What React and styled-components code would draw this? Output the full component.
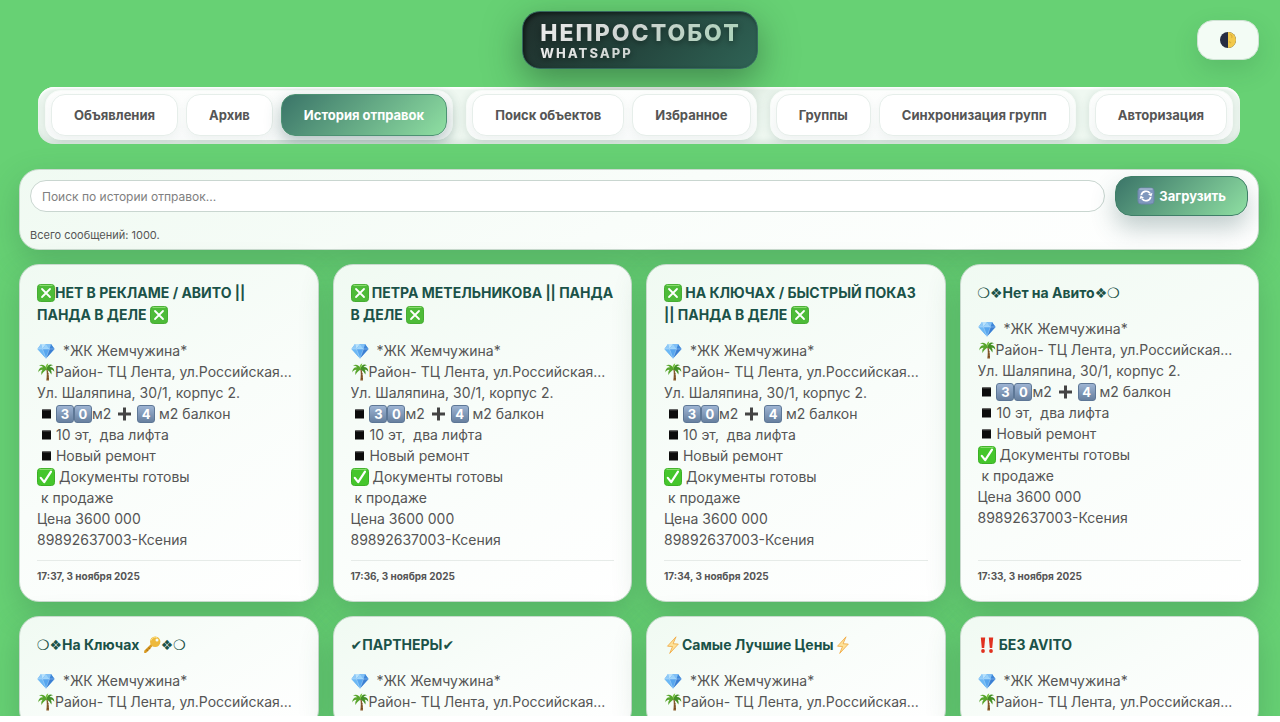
import React, { useState } from 'react'
import styled, { createGlobalStyle, css, ThemeProvider } from 'styled-components'

const theme = {
    page: '#67d174',
    text: '#555555',
    title: '#1b5248',
    dark: '#3a7468',
    light: '#8fdfa2',
    panel: 'linear-gradient(150deg, #f0faf2 0%, #f9fdfa 50%, #ffffff 100%)',
}

const GlobalStyle = createGlobalStyle`
    * {
        box-sizing: border-box;
    }

    body {
        margin: 0;
        background: #ffffff;
        color: ${({theme})=>theme.text};
        font-family: Inter, "Noto Sans", "DejaVu Sans", sans-serif;
    }

    button,
    input {
        font-family: inherit;
    }
`

const Page = styled.div`
    height: calc(100vh - 6px);
    overflow: hidden;
    background: ${({theme})=>theme.page};
`

const Header = styled.header`
    display: grid;
    grid-template-columns: 1fr auto 1fr;
    align-items: center;
    padding: 11px 21px 0;
`

const Logo = styled.div`
    grid-column: 2;
    padding: 8px 16px 7px 17px;
    border: 1px solid #35695f;
    border-radius: 18px;
    background: linear-gradient(135deg, #1f2e2b 0%, #24453d 50%, #2f6355 100%);
    box-shadow: 0 12px 36px rgba(30, 70, 40, 0.5), inset 2px 2px 4px rgba(0, 0, 0, 0.5);
`

const LogoText = styled.span`
    display: block;
    color: transparent;
    background: linear-gradient(135deg, #ececec 0%, #cdd3d0 45%, #a9d3b8 100%);
    background-clip: text;
    filter: drop-shadow(0 2px 3px rgba(0, 0, 0, 0.4));
`

const LogoTitle = styled(LogoText)`
    font-size: 23px;
    line-height: 26px;
    font-weight: 800;
    letter-spacing: 2px;
`

const LogoSub = styled(LogoText)`
    font-size: 13px;
    line-height: 15px;
    font-weight: 800;
    letter-spacing: 2px;
`

const ThemeButton = styled.button`
    grid-column: 3;
    justify-self: end;
    display: flex;
    align-items: center;
    justify-content: center;
    width: 62px;
    height: 40px;
    border: 1px solid #cfe3d4;
    border-radius: 16px;
    background: #f3fcf5;
    box-shadow: 0 10px 24px rgba(40, 100, 60, 0.18);
    cursor: pointer;
`

const Nav = styled.nav`
    display: flex;
    justify-content: space-between;
    margin: 18px 40px 0 38px;
    padding: 3px 7px 4px;
    overflow: hidden;
    border-radius: 16px;
    background: #eff8f1;
    box-shadow: inset 0 2px 2px #ffffff, inset 0 -4px 4px rgba(60, 110, 90, 0.1);
`

const NavGroup = styled.div`
    display: flex;
    gap: 8px;
    padding: 3px 5px;
    border: 1px solid #f7fbf8;
    border-radius: 16px;
    background: linear-gradient(180deg, #fdfefd, #f8fafa);
    box-shadow: 0 2px 10px rgba(50, 90, 80, 0.16);
`

const NavButton = styled.button`
    height: 42px;
    padding: 0 22px;
    border: 1px solid #e6eeea;
    border-radius: 14px;
    background: #ffffff;
    box-shadow: 0 3px 8px rgba(60, 90, 80, 0.05);
    color: ${({theme})=>theme.text};
    font-size: 13px;
    font-weight: 700;
    white-space: nowrap;
    cursor: pointer;

    ${({$active})=>$active && css`
        border-color: #4d9273;
        background: linear-gradient(135deg, ${({theme})=>theme.dark}, ${({theme})=>theme.light});
        box-shadow: 0 6px 16px rgba(50, 90, 90, 0.35);
        color: #ffffff;
    `}
`

const Main = styled.main`
    display: flex;
    flex-direction: column;
    gap: 14px;
    padding: 25px 21px 0 19px;
`

const SearchPanel = styled.section`
    padding: 6px 10px 5px;
    border: 1px solid #c9dace;
    border-radius: 20px;
    background: ${({theme})=>theme.panel};
    box-shadow: 0 12px 32px rgba(50, 110, 70, 0.3);
`

const SearchRow = styled.form`
    display: flex;
    align-items: center;
    gap: 10px;
`

const SearchInput = styled.input`
    flex: 1;
    min-width: 0;
    height: 32px;
    padding: 0 11px;
    border: 1px solid #c9d6d0;
    border-radius: 16px;
    outline: none;
    background: #ffffff;
    color: ${({theme})=>theme.text};
    font-size: 12px;

    &::placeholder {
        color: #808080;
    }
`

const LoadButton = styled.button`
    display: flex;
    align-items: center;
    gap: 4px;
    height: 40px;
    padding: 0 21px;
    border: 1px solid #3f7f68;
    border-radius: 16px;
    background: linear-gradient(135deg, ${({theme})=>theme.dark}, ${({theme})=>theme.light});
    box-shadow: 0 12px 24px rgba(50, 90, 90, 0.3);
    color: #ffffff;
    font-size: 13px;
    font-weight: 700;
    cursor: pointer;
`

const Total = styled.p`
    margin: 10px 0 0;
    font-size: 11px;
    line-height: 18px;
`

const Cards = styled.div`
    display: grid;
    grid-template-columns: repeat(4, minmax(0, 1fr));
    gap: 14px;
`

const CardBox = styled.article`
    display: flex;
    flex-direction: column;
    padding: 17px;
    border: 1px solid #c9dace;
    border-radius: 20px;
    background: ${({theme})=>theme.panel};
    box-shadow: 0 12px 32px rgba(50, 110, 70, 0.3);
`

const CardTitle = styled.h2`
    margin: 0 0 14px;
    color: ${({theme})=>theme.title};
    font-size: 14px;
    line-height: 22px;
    font-weight: 700;
`

const CardBody = styled.div`
    flex: 1;
    font-size: 14px;
    line-height: 21px;
    white-space: pre;
`

const Line = styled.div`
    height: 21px;
    overflow: hidden;
    text-overflow: ellipsis;
`

const CardDate = styled.time`
    display: block;
    margin-top: 10px;
    padding-top: 7px;
    border-top: 1px solid #e6ebe8;
    font-size: 10px;
    line-height: 16px;
    font-weight: 700;
`

const Icon = styled.svg`
    display: inline-block;
    flex: none;
    width: ${({$width})=>$width || 18}px;
    height: 18px;
    vertical-align: -4px;
`

const Symbol = styled.span`
    font-family: "DejaVu Sans", sans-serif;
    font-weight: 700;
    line-height: 1;
`

const Keycap = styled.span`
    display: inline-block;
    width: 18px;
    height: 18px;
    border: 1px solid #5d7796;
    border-radius: 3px;
    background: linear-gradient(180deg, #9db4d3, #67809f);
    color: #ffffff;
    font-size: 13px;
    line-height: 16px;
    font-weight: 700;
    text-align: center;
`

const CrossBox = ()=>(
    <Icon viewBox="0 0 18 18" role="img" aria-label="крестик">
        <rect x="0.5" y="0.5" width="17" height="17" rx="3" fill="#4dbb38" stroke="#46ad32" />
        <path d="M2.5 1.4h13" stroke="#8ee074" />
        <path d="M5 5l8 8M13 5l-8 8" stroke="#ffffff" strokeWidth="1.800" strokeLinecap="round" />
    </Icon>
)

const CheckBox = ()=>(
    <Icon viewBox="0 0 18 18" role="img" aria-label="галочка">
        <rect x="0.5" y="0.5" width="17" height="17" rx="3" fill="#45c62c" stroke="#3cb026" />
        <path d="M2.5 1.4h13" stroke="#8ee074" />
        <path d="M3.8 9.8l3.4 4.4L14 3.6" fill="none" stroke="#ffffff" strokeWidth="2.2" strokeLinecap="round" strokeLinejoin="round" />
    </Icon>
)

const Diamond = ()=>(
    <Icon viewBox="0 0 18 18" role="img" aria-label="алмаз">
        <path d="M4 2h10l3.5 5L9 16.5.5 7z" fill="#57a6ee" />
        <path d="M4 2L.5 7H5.500z" fill="#8fcaf8" />
        <path d="M14 2l3.500 5h-5z" fill="#3f86d8" />
        <path d="M4 2h5L5.500 7z" fill="#b9e2fc" />
        <path d="M9 2h5l-1.500 5z" fill="#81bff5" />
        <path d="M9 2L5.500 7h7z" fill="#9ad2fa" />
        <path d="M.5 7h5L9 16.500z" fill="#6cb8f4" />
        <path d="M17.500 7h-5L9 16.500z" fill="#3c7fd2" />
        <path d="M.5 7h17M5.500 7L9 16.500 12.500 7" fill="none" stroke="#c7e7fd" strokeWidth="0.4" />
    </Icon>
)

const Palm = ()=>(
    <Icon viewBox="0 0 18 18" role="img" aria-label="пальма">
        <path d="M9.200 6c.8 3 .7 7 .1 11.500h2.700C12 13 11.500 9 10 5.500z" fill="#8a5a2b" />
        <path d="M10.200 8h1M10.500 10.500h1M10.500 13h1.200M10.300 15.500h1.400" stroke="#5b3716" strokeWidth="0.6" />
        <path d="M9.600 5.500C8 2 4.500.8 1.800 2.900c2.500-.3 3.700.5 4.300 1.400C3.300 4 1.200 6 1.300 9.500c1-2 2.500-2.800 4.200-2.600C4.200 8.300 4 10 4.700 12c.8-2.500 2.500-4 4.900-5.500z" fill="#57a52c" />
        <path d="M9.400 5.500C10.500 1.800 13.500.5 16 2.400c-2 0-3 .7-3.400 1.600 2.800-.2 4.800 1.700 4.700 4.700-1.100-1.700-2.300-2.300-3.800-2 1.200 1.300 1.400 3 .8 4.800-1-2.300-2.500-3.700-4.800-5z" fill="#438f24" />
        <path d="M9.500 5.600C8 3.300 9 1.200 11.300.4c-.5 1.700-.5 3.300-1.800 5.200z" fill="#79c443" />
    </Icon>
)

const Square = ()=>(
    <Icon $width={15} viewBox="0 0 15 18" role="img" aria-label="пункт">
        <rect x="1" y="4.500" width="9" height="9" fill="#0c0c0c" />
        <path d="M1.500 5h8" stroke="#4a4a4a" />
    </Icon>
)

const Plus = ()=>(
    <Icon viewBox="0 0 18 18" role="img" aria-label="плюс">
        <path d="M9.500 2.500v13M3 9h13" stroke="#444444" strokeWidth="3" />
    </Icon>
)

const KeyIcon = ()=>(
    <Icon viewBox="0 0 18 18" role="img" aria-label="ключ">
        <path d="M10 9.500L3 17H1.200v-2.200L8.500 7.500z" fill="#d99a20" />
        <path d="M3.500 13.500l1.700 1.700M5.500 11.500l1.700 1.700" stroke="#b27511" strokeWidth="1.200" />
        <circle cx="12.200" cy="5.800" r="5.200" fill="#eeb93b" />
        <path d="M8 4.500a4.700 4.700 0 0 1 6-3" fill="none" stroke="#fbdf82" />
        <circle cx="14" cy="4" r="1.500" fill="#f3fbf5" />
    </Icon>
)

const Bolt = ()=>(
    <Icon viewBox="0 0 18 18" role="img" aria-label="молния">
        <path d="M12 .8L3.500 10.200l5 .3-2.800 6.900 8.600-9.300-5.200-.4z" fill="#fde29a" stroke="#f0a63c" strokeWidth="0.8" strokeLinejoin="round" />
    </Icon>
)

const DoubleBang = ()=>(
    <Icon viewBox="0 0 18 18" role="img" aria-label="внимание">
        <path d="M2.800 1.500h4.400L6.200 12H3.800zM10.800 1.500h4.400l-1 10.500h-2.400z" fill="#e0311f" />
        <circle cx="5" cy="15" r="1.900" fill="#e0311f" />
        <circle cx="13" cy="15" r="1.900" fill="#e0311f" />
    </Icon>
)

const Moon = ()=>(
    <Icon viewBox="0 0 18 18" aria-hidden="true">
        <circle cx="9" cy="9" r="8" fill="#272c42" />
        <path d="M9 1a8 8 0 0 1 0 16z" fill="#f2c94c" />
        <path d="M11 3.500a2 2 0 0 1 1.500 3.300M10 10.500l2 1.500" fill="none" stroke="#dcae3a" strokeWidth="1.200" />
    </Icon>
)

const Reload = ()=>(
    <Icon viewBox="0 0 18 18" aria-hidden="true">
        <rect x="1" y="1" width="16" height="16" rx="3" fill="#7f98bd" stroke="#6d84a8" />
        <path d="M2.500 2h13" stroke="#b9c9e0" />
        <path d="M4.300 8.200A4.900 4.900 0 0 1 13 6.200M13.700 9.800A4.900 4.900 0 0 1 5 11.800" fill="none" stroke="#ffffff" strokeWidth="1.700" />
        <path d="M15.400 6l-1 3.600-3.400-2.400zM2.600 12l1-3.600 3.400 2.400z" fill="#ffffff" />
    </Icon>
)

const groups = [
    ['Объявления', 'Архив', 'История отправок'],
    ['Поиск объектов', 'Избранное'],
    ['Группы', 'Синхронизация групп'],
    ['Авторизация'],
]

const messages = [
    { id: 1, title: <><CrossBox />НЕТ В РЕКЛАМЕ / АВИТО || ПАНДА В ДЕЛЕ <CrossBox /></>, date: '17:37, 3 ноября 2025' },
    { id: 2, title: <><CrossBox /> ПЕТРА МЕТЕЛЬНИКОВА || ПАНДА В ДЕЛЕ <CrossBox /></>, date: '17:36, 3 ноября 2025' },
    { id: 3, title: <><CrossBox /> НА КЛЮЧАХ / БЫСТРЫЙ ПОКАЗ || ПАНДА В ДЕЛЕ <CrossBox /></>, date: '17:34, 3 ноября 2025' },
    { id: 4, title: <><Symbol>❍❖</Symbol>Нет на Авито<Symbol>❖❍</Symbol></>, date: '17:33, 3 ноября 2025' },
    { id: 5, short: true, title: <><Symbol>❍❖</Symbol>На Ключах <KeyIcon /><Symbol>❖❍</Symbol></> },
    { id: 6, short: true, title: <><Symbol>✔</Symbol>ПАРТНЕРЫ<Symbol>✔</Symbol></> },
    { id: 7, short: true, title: <><Bolt />Самые Лучшие Цены<Bolt /></> },
    { id: 8, short: true, title: <><DoubleBang /> БЕЗ AVITO</> },
]

const Card = ({title, date, short})=>{
    return (
        <CardBox>
            <CardTitle>{title}</CardTitle>
            <CardBody>
                <Line><Diamond />{'  *ЖК Жемчужина*'}</Line>
                <Line><Palm />Район- ТЦ Лента, ул.Российская...</Line>
                {!short && (
                    <>
                        <Line>Ул. Шаляпина, 30/1, корпус 2.</Line>
                        <Line>{' '}<Square /><Keycap>3</Keycap><Keycap>0</Keycap>{'м2 '}<Plus />{' '}<Keycap>4</Keycap>{' м2 балкон'}</Line>
                        <Line>{' '}<Square />{'10 эт,  два лифта'}</Line>
                        <Line>{' '}<Square />Новый ремонт</Line>
                        <Line><CheckBox />{' Документы готовы'}</Line>
                        <Line>{' к продаже'}</Line>
                        <Line>Цена 3600 000</Line>
                        <Line>89892637003-Ксения</Line>
                    </>
                )}
            </CardBody>
            {date && <CardDate>{date}</CardDate>}
        </CardBox>
    )
}

export default function App() {
    const [active, setActive] = useState('История отправок')
    const [query, setQuery] = useState('')

    return (
        <ThemeProvider theme={theme}>
            <GlobalStyle />
            <Page>
                <Header>
                    <Logo>
                        <LogoTitle>НЕПРОСТОБОТ</LogoTitle>
                        <LogoSub>WHATSAPP</LogoSub>
                    </Logo>
                    <ThemeButton type="button" aria-label="Сменить тему"><Moon /></ThemeButton>
                </Header>
                <Nav>
                    {groups.map((items)=>(
                        <NavGroup key={items[0]}>
                            {items.map((item)=>(
                                <NavButton key={item} type="button" $active={item === active} onClick={()=>setActive(item)}>
                                    {item}
                                </NavButton>
                            ))}
                        </NavGroup>
                    ))}
                </Nav>
                <Main>
                    <SearchPanel>
                        <SearchRow onSubmit={(e)=>e.preventDefault()}>
                            <SearchInput
                                type="text"
                                aria-label="Поиск по истории отправок"
                                placeholder="Поиск по истории отправок..."
                                value={query}
                                onChange={(e)=>setQuery(e.target.value)}
                            />
                            <LoadButton type="submit"><Reload />Загрузить</LoadButton>
                        </SearchRow>
                        <Total>Всего сообщений: 1000.</Total>
                    </SearchPanel>
                    <Cards>
                        {messages.map((message)=>(
                            <Card key={message.id} title={message.title} date={message.date} short={message.short} />
                        ))}
                    </Cards>
                </Main>
            </Page>
        </ThemeProvider>
    )
}
